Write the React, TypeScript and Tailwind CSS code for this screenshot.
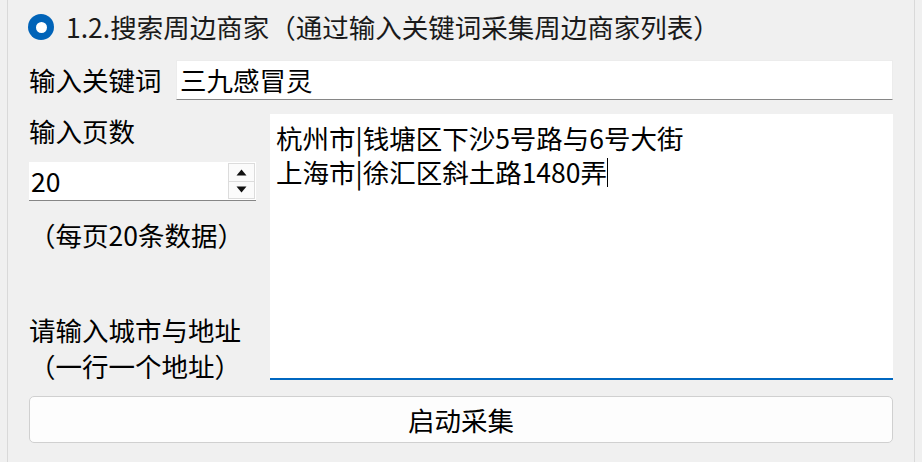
export default function App() {
  const font = {
    fontFamily: '"Microsoft YaHei UI", "Noto Sans CJK SC", "Noto Sans", sans-serif',
  };
  return (
    <div
      className="w-[922px] h-[462px] bg-[#f0f0f0] text-black text-[26.5px] overflow-hidden"
      style={font}
    >
      <div className="ml-[7px] w-[908px] h-full border-x border-[#d9d9d9] pl-[21px] pr-[21px]">
        {/* section title with radio */}
        <div className="flex items-center h-[54px] -ml-[1px] gap-[12px]">
          <div className="w-[26px] h-[26px] rounded-full bg-[#0063b8] flex items-center justify-center">
            <div className="w-[11px] h-[11px] rounded-full bg-white" />
          </div>
          <span className="leading-[34px] text-[#1a1a1a]">
            1.2.搜索周边商家（通过输入关键词采集周边商家列表）
          </span>
        </div>

        {/* keyword row */}
        <div className="flex items-center mt-[6px] h-[40px]">
          <span className="w-[147px] leading-[34px]">输入关键词</span>
          <div className="flex-1 h-[40px] bg-white border border-[#ececec] border-b-[#868686] px-[3px] leading-[38px]">
            三九感冒灵
          </div>
        </div>

        {/* pages + address row */}
        <div className="flex mt-[14px] h-[266px] gap-[14px]">
          <div className="w-[227px] flex flex-col">
            <div className="h-[34px] leading-[34px]">输入页数</div>
            <div className="mt-[14px] h-[39px] flex items-center bg-white border-b border-[#868686] pl-[2px]">
              <span className="flex-1 leading-[38px]">20</span>
              <div className="w-[27px] h-[36px] mr-[1px] flex flex-col border border-[#dcdcdc] bg-[#fbfbfb]">
                <div className="flex-1 flex items-center justify-center border-b border-[#dcdcdc]">
                  <svg width="11" height="7" viewBox="0 0 11 7">
                    <path d="M5.5 0.5 L10.5 6.5 L0.5 6.5 Z" fill="#111" />
                  </svg>
                </div>
                <div className="flex-1 flex items-center justify-center">
                  <svg width="11" height="7" viewBox="0 0 11 7">
                    <path d="M0.5 0.5 L10.5 0.5 L5.5 6.5 Z" fill="#111" />
                  </svg>
                </div>
              </div>
            </div>
            <div className="mt-[17px] h-[34px] leading-[34px]">（每页20条数据）</div>
            <div className="mt-auto -mb-[4px] leading-[36px]">
              <div>请输入城市与地址</div>
              <div>（一行一个地址）</div>
            </div>
          </div>
          <div className="flex-1 h-[266px] bg-white border-b-2 border-[#0067c0] px-[6px] pt-[7px] leading-[34px]">
            <div>杭州市|钱塘区下沙5号路与6号大街</div>
            <div className="flex items-center">
              <span>上海市|徐汇区斜土路1480弄</span>
              <span className="inline-block w-[1px] h-[29px] bg-black" />
            </div>
          </div>
        </div>

        {/* start button */}
        <button className="mt-[16px] w-full h-[47px] rounded-[5px] bg-[#fdfdfd] border border-[#d0d0d0] leading-[45px] text-center">
          启动采集
        </button>
      </div>
    </div>
  );
}
